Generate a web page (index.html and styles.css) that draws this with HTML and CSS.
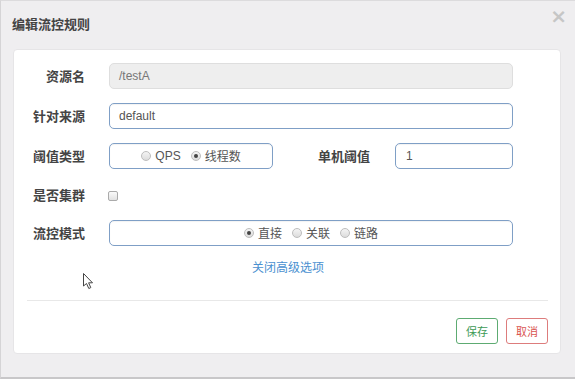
FILE: index.html
```html
<!DOCTYPE html>
<html>
<head>
<meta charset="utf-8">
<link rel="stylesheet" href="styles.css">
</head>
<body>
<div class="dialog">
  <div class="header">
    <span class="title">编辑流控规则</span>
    <span class="close">×</span>
  </div>
  <div class="card">
    <div class="form">
      <div class="row">
        <label class="label">资源名</label>
        <div class="input disabled wide">/testA</div>
      </div>
      <div class="row">
        <label class="label">针对来源</label>
        <div class="input wide">default</div>
      </div>
      <div class="row">
        <label class="label">阈值类型</label>
        <div class="input radios short">
          <span class="radio"></span><span class="opt latin">QPS</span>
          <span class="radio on"></span><span class="opt">线程数</span>
        </div>
        <label class="label second">单机阈值</label>
        <div class="input num">1</div>
      </div>
      <div class="row check-row">
        <label class="label">是否集群</label>
        <span class="checkbox"></span>
      </div>
      <div class="row">
        <label class="label">流控模式</label>
        <div class="input radios wide">
          <span class="radio on"></span><span class="opt">直接</span>
          <span class="radio"></span><span class="opt">关联</span>
          <span class="radio"></span><span class="opt">链路</span>
        </div>
      </div>
      <div class="link-row"><a class="link">关闭高级选项</a></div>
    </div>
    <div class="footer">
      <span class="btn save">保存</span>
      <span class="btn cancel">取消</span>
    </div>
    <svg class="cursor" width="12" height="18" viewBox="0 0 12 18"><path d="M0.5 0.5 L0.5 13 L3.5 10.5 L5.8 15.5 L7.8 14.6 L5.6 9.8 L9.5 9.8 Z" fill="#fff" stroke="#444" stroke-width="1"/></svg>
  </div>
</div>
</body>
</html>
```
FILE: styles.css
```css
html, body {
  margin: 0;
  padding: 0;
}
body {
  width: 575px;
  height: 379px;
  background: #efeef0;
  font-family: "Liberation Sans", "Noto Sans CJK SC", sans-serif;
  color: #333;
  overflow: hidden;
}
.dialog {
  box-sizing: border-box;
  width: 575px;
  height: 379px;
  border-top: 1px solid #dcdbdd;
  border-left: 1px solid #d5d4d6;
  border-bottom: 2px solid #c8c7c9;
  padding: 0 14px 0 12px;
}
.header {
  height: 48px;
  display: flex;
  align-items: center;
  justify-content: space-between;
  position: relative;
}
.title {
  font-family: "Noto Sans CJK SC", sans-serif;
  font-size: 13px;
  font-weight: 700;
  color: #444;
  margin-top: -4px;
  margin-left: -1px;
}
.close {
  position: absolute;
  right: -6px;
  top: 3px;
  font-size: 20px;
  color: #c6c6c6;
  font-family: "DejaVu Sans", sans-serif;
  font-weight: 700;
}
.card {
  position: relative;
  background: #fff;
  border: 1px solid #e6e5e7;
  border-radius: 4px;
  height: 305px;
  box-sizing: border-box;
  padding: 13px 0 0 0;
}
.form {
  display: flex;
  flex-direction: column;
  gap: 15px;
}
.row {
  display: flex;
  align-items: center;
  height: 25px;
}
.check-row {
  height: 22px;
}
.label {
  width: 71px;
  text-align: right;
  font-family: "Noto Sans CJK SC", sans-serif;
  font-size: 13px;
  font-weight: 700;
  color: #444;
  margin-right: 24px;
}
.label.second {
  width: auto;
  margin-left: 45px;
  text-align: left;
  margin-right: 25px;
}
.input {
  box-sizing: border-box;
  height: 26px;
  border: 1px solid #7f9fc6;
  border-radius: 5px;
  font-size: 12px;
  color: #555;
  padding: 0 9px;
  display: flex;
  align-items: center;
  box-shadow: inset 0 1px 1px rgba(0,0,0,0.05);
}
.wide { width: 404px; }
.short { width: 164px; }
.num { width: 118px; padding-left: 10px; }
.disabled {
  background: #eeeeee;
  border-color: #dedede;
  color: #777;
  box-shadow: none;
}
.radios {
  justify-content: center;
  font-family: "Noto Sans CJK SC", sans-serif;
}
.radio {
  box-sizing: border-box;
  width: 10px;
  height: 10px;
  border-radius: 50%;
  border: 1px solid #bdbdbd;
  background: linear-gradient(#f4f4f4, #dcdcdc);
  margin-right: 4px;
  position: relative;
}
.radio.on::after {
  content: "";
  position: absolute;
  left: 2px;
  top: 2px;
  width: 4px;
  height: 4px;
  border-radius: 50%;
  background: #444;
}
.opt {
  margin-right: 10px;
  font-size: 12px;
  color: #555;
}
.opt:last-child { margin-right: 0; }
.opt.latin { font-family: "Liberation Sans", sans-serif; }
.checkbox {
  box-sizing: border-box;
  width: 10px;
  height: 10px;
  border: 1px solid #aaa;
  border-radius: 2px;
  background: linear-gradient(#fafafa, #e2e2e2);
  margin-left: -1px;
  margin-top: 4px;
}
.link-row {
  text-align: center;
  margin-top: -2px;
  height: 18px;
}
.link {
  font-family: "Noto Sans CJK SC", sans-serif;
  font-size: 12px;
  color: #4a90d0;
  position: relative;
  left: 1px;
}
.footer {
  margin: 24px 12px 0 13px;
  border-top: 1px solid #e8e8e8;
  padding-top: 17px;
  display: flex;
  justify-content: flex-end;
  gap: 8px;
}
.btn {
  box-sizing: border-box;
  width: 42px;
  height: 26px;
  border-radius: 3px;
  font-family: "Noto Sans CJK SC", sans-serif;
  font-size: 11px;
  display: flex;
  align-items: center;
  justify-content: center;
}
.save { border: 1px solid #5dab72; color: #3e9a56; }
.cancel { border: 1px solid #dd7c7c; color: #d9534f; }
.cursor {
  position: absolute;
  left: 69px;
  top: 223px;
}
```
